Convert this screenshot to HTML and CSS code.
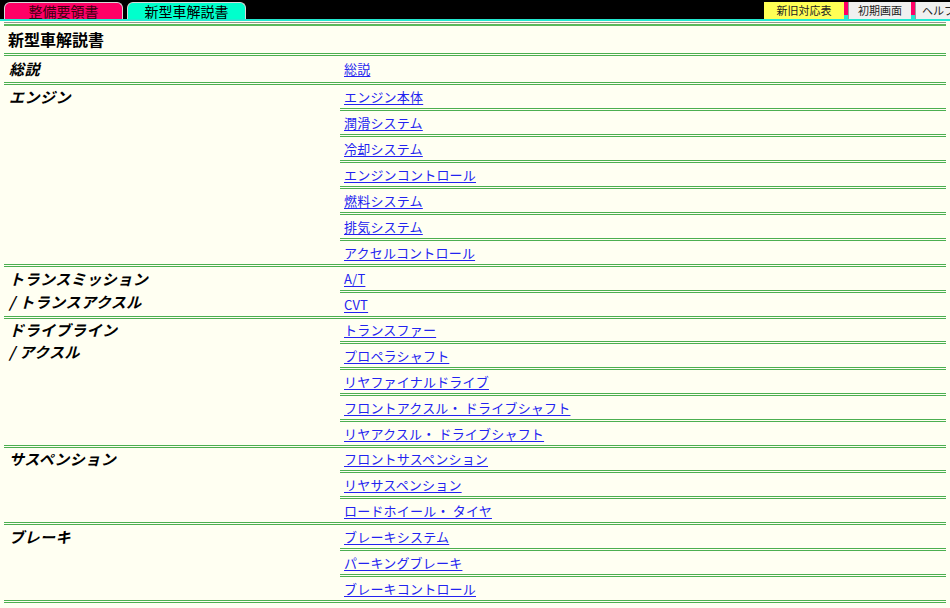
FILE: index.html
```html
<!DOCTYPE html>
<html lang="ja">
<head>
<meta charset="utf-8">
<title>新型車解説書</title>
<link rel="stylesheet" href="styles.css">
</head>
<body>
<header class="topbar">
  <nav class="tabs">
    <div class="tab tab-pink">整備要領書</div>
    <div class="tab tab-cyan">新型車解説書</div>
  </nav>
  <div class="tools">
    <div class="tool tool-yellow">新旧対応表</div>
    <div class="tool-sep"></div>
    <div class="tool tool-gray">初期画面</div>
    <div class="tool-sep"></div>
    <div class="tool tool-gray tool-help">ヘルプ</div>
  </div>
</header>
<main class="main">
  <div class="topline"></div>
  <h1 class="title">新型車解説書</h1>
  <div class="index">
    <section class="group group-first">
      <div class="label">総説</div>
      <ul class="links">
        <li><a href="#">総説</a></li>
      </ul>
    </section>
    <section class="group">
      <div class="label">エンジン</div>
      <ul class="links">
        <li><a href="#">エンジン本体</a></li>
        <li><a href="#">潤滑システム</a></li>
        <li><a href="#">冷却システム</a></li>
        <li><a href="#">エンジンコントロール</a></li>
        <li><a href="#">燃料システム</a></li>
        <li><a href="#">排気システム</a></li>
        <li><a href="#">アクセルコントロール</a></li>
      </ul>
    </section>
    <section class="group">
      <div class="label">トランスミッション<br>/ トランスアクスル</div>
      <ul class="links">
        <li><a href="#">A/T</a></li>
        <li><a href="#">CVT</a></li>
      </ul>
    </section>
    <section class="group group-tight">
      <div class="label">ドライブライン<br>/ アクスル</div>
      <ul class="links">
        <li><a href="#">トランスファー</a></li>
        <li><a href="#">プロペラシャフト</a></li>
        <li><a href="#">リヤファイナルドライブ</a></li>
        <li><a href="#">フロントアクスル・ ドライブシャフト</a></li>
        <li><a href="#">リヤアクスル・ ドライブシャフト</a></li>
      </ul>
    </section>
    <section class="group group-tight">
      <div class="label">サスペンション</div>
      <ul class="links">
        <li><a href="#">フロントサスペンション</a></li>
        <li><a href="#">リヤサスペンション</a></li>
        <li><a href="#">ロードホイール・ タイヤ</a></li>
      </ul>
    </section>
    <section class="group">
      <div class="label">ブレーキ</div>
      <ul class="links">
        <li><a href="#">ブレーキシステム</a></li>
        <li><a href="#">パーキングブレーキ</a></li>
        <li><a href="#">ブレーキコントロール</a></li>
      </ul>
    </section>
  </div>
</main>
</body>
</html>
```

FILE: styles.css
```css
* {
  box-sizing: border-box;
}

html,
body {
  margin: 0;
  padding: 0;
}

body {
  width: 950px;
  height: 608px;
  overflow: hidden;
  background: #fffff2;
  font-family: "Noto Sans CJK JP", "Noto Sans", sans-serif;
  color: #000;
}

/* ---------- top bar ---------- */
.topbar {
  display: flex;
  height: 21px;
  background: #000;
  border-bottom: 2px solid #22e8d0;
  overflow: hidden;
}

.tabs {
  flex: none;
  width: 764px;
  display: flex;
  gap: 4px;
  padding: 2px 0 0 4px;
}

.tab {
  width: 119px;
  height: 17px;
  border: 1px solid #d8d8d8;
  border-bottom: none;
  border-radius: 6px 6px 0 0;
  font-size: 14px;
  line-height: 16px;
  text-align: center;
}

.tab-pink {
  background: #ff0066;
  color: #3a0010;
}

.tab-cyan {
  background: #00ffcc;
  color: #000;
}

.tools {
  flex: none;
  display: flex;
  padding-top: 2px;
}

.tool {
  height: 17px;
  font-size: 11px;
  line-height: 17px;
  text-align: center;
  color: #222;
}

.tool-yellow {
  width: 80px;
  background: #ffff55;
}

.tool-gray {
  width: 63px;
  background: #f0f0f0;
  border-left: 1px solid #999;
}

.tool-help {
  width: 70px;
  text-align: left;
  padding-left: 6px;
}

.tool-sep {
  width: 4px;
  height: 17px;
  background: linear-gradient(#ff0066 0 75%, #22e8d0 75% 100%);
}

/* ---------- main ---------- */
.main {
  padding: 0 4px;
}

.topline {
  margin-top: 1px;
  height: 4px;
  border-top: 1px solid #8f9a8f;
  border-bottom: 2px solid #5cb85c;
}

.title {
  margin: 0;
  height: 27px;
  padding-left: 4px;
  font-size: 16px;
  font-weight: bold;
  line-height: 27px;
}

.group {
  display: flex;
  border-top: 3px double #4caf50;
}

.group:last-child {
  border-bottom: 3px double #4caf50;
}

.label {
  flex: none;
  width: 336px;
  padding: 0 6px 0 5px;
  font-size: 15px;
  letter-spacing: 0.5px;
  font-weight: bold;
  font-style: italic;
  line-height: 23px;
}

.links {
  flex: 1;
  margin: 0;
  padding: 0;
  list-style: none;
}

.links li {
  height: 23px;
  padding-left: 4px;
  font-size: 13px;
  letter-spacing: 0.2px;
  line-height: 23px;
}

.links li + li {
  height: 26px;
  border-top: 3px double #4caf50;
}

.group-first .label {
  line-height: 25px;
}

.group-first .links li {
  height: 26px;
  line-height: 25px;
}

.group-tight .label {
  line-height: 22px;
}

.group-tight .links li:first-child {
  height: 22px;
  line-height: 22px;
}

.links a {
  color: #2323f0;
  text-decoration: underline;
  text-underline-offset: 2px;
}
```
